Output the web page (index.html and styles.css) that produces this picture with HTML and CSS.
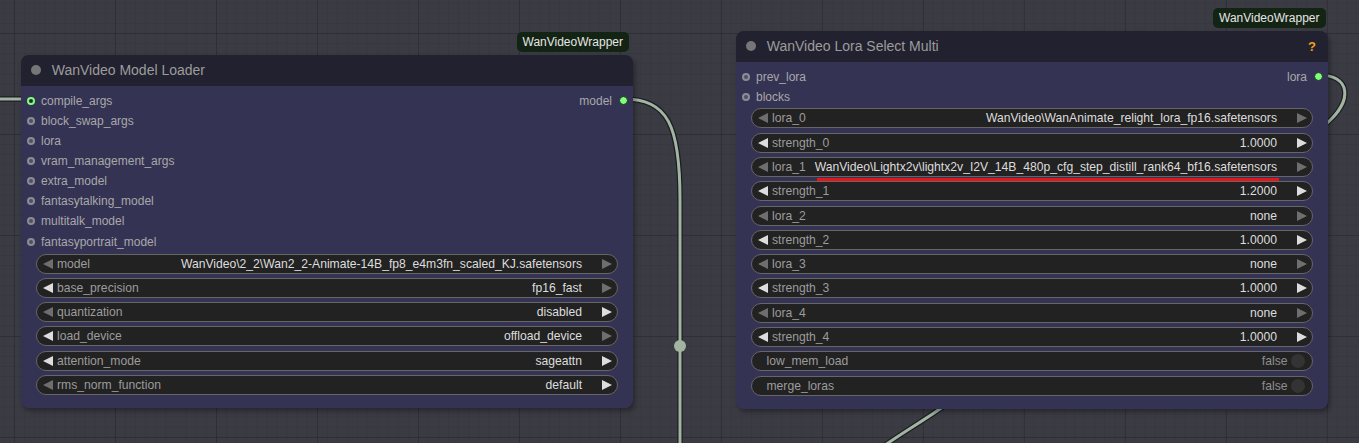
FILE: index.html
```html
<!DOCTYPE html>
<html>
<head>
<meta charset="utf-8">
<link rel="stylesheet" href="styles.css">
</head>
<body>
<div class="canvas">
  <svg class="links" width="1359" height="443" viewBox="0 0 1359 443">
    <g fill="none" stroke-linecap="round">
      <path class="link-edge" d="M0 99 L31 99"/>
      <path class="link-edge" d="M623 99 C668 99, 680 125, 680 200 L680 450"/>
      <path class="link-edge" d="M1319 75 C1350 75, 1354 100, 1326 124"/>
      <path class="link-edge" d="M958 396 C932 416, 906 430, 878 450"/>
      <path class="link" d="M0 99 L31 99"/>
      <path class="link" d="M623 99 C668 99, 680 125, 680 200 L680 450"/>
      <path class="link" d="M1319 75 C1350 75, 1354 100, 1326 124"/>
      <path class="link" d="M958 396 C932 416, 906 430, 878 450"/>
    </g>
    <circle cx="680" cy="346" r="6" class="link-dot"/>
  </svg>

  <div class="node loader">
    <div class="badge badge-loader">WanVideoWrapper</div>
    <div class="header">
      <span class="hdot"></span>
      <span class="title">WanVideo Model Loader</span>
    </div>
    <div class="slots">
      <div class="slot"><span class="in-dot on"></span><span>compile_args</span><span class="out"><span>model</span><span class="out-dot"></span></span></div>
      <div class="slot"><span class="in-dot"></span><span>block_swap_args</span></div>
      <div class="slot"><span class="in-dot"></span><span>lora</span></div>
      <div class="slot"><span class="in-dot"></span><span>vram_management_args</span></div>
      <div class="slot"><span class="in-dot"></span><span>extra_model</span></div>
      <div class="slot"><span class="in-dot"></span><span>fantasytalking_model</span></div>
      <div class="slot"><span class="in-dot"></span><span>multitalk_model</span></div>
      <div class="slot"><span class="in-dot"></span><span>fantasyportrait_model</span></div>
    </div>
    <div class="widgets w-loader">
      <div class="w"><svg class="arr off" viewBox="0 0 10 10"><polygon points="10,0 0,5 10,10"/></svg><span class="lbl">model</span><span class="val">WanVideo\2_2\Wan2_2-Animate-14B_fp8_e4m3fn_scaled_KJ.safetensors</span><svg class="arr off" viewBox="0 0 10 10"><polygon points="0,0 10,5 0,10"/></svg></div>
      <div class="w"><svg class="arr" viewBox="0 0 10 10"><polygon points="10,0 0,5 10,10"/></svg><span class="lbl">base_precision</span><span class="val">fp16_fast</span><svg class="arr off" viewBox="0 0 10 10"><polygon points="0,0 10,5 0,10"/></svg></div>
      <div class="w"><svg class="arr off" viewBox="0 0 10 10"><polygon points="10,0 0,5 10,10"/></svg><span class="lbl">quantization</span><span class="val">disabled</span><svg class="arr" viewBox="0 0 10 10"><polygon points="0,0 10,5 0,10"/></svg></div>
      <div class="w"><svg class="arr" viewBox="0 0 10 10"><polygon points="10,0 0,5 10,10"/></svg><span class="lbl">load_device</span><span class="val">offload_device</span><svg class="arr off" viewBox="0 0 10 10"><polygon points="0,0 10,5 0,10"/></svg></div>
      <div class="w"><svg class="arr" viewBox="0 0 10 10"><polygon points="10,0 0,5 10,10"/></svg><span class="lbl">attention_mode</span><span class="val">sageattn</span><svg class="arr" viewBox="0 0 10 10"><polygon points="0,0 10,5 0,10"/></svg></div>
      <div class="w"><svg class="arr off" viewBox="0 0 10 10"><polygon points="10,0 0,5 10,10"/></svg><span class="lbl">rms_norm_function</span><span class="val">default</span><svg class="arr" viewBox="0 0 10 10"><polygon points="0,0 10,5 0,10"/></svg></div>
    </div>
  </div>

  <div class="node multi">
    <div class="badge badge-multi">WanVideoWrapper</div>
    <div class="header">
      <span class="hdot"></span>
      <span class="title">WanVideo Lora Select Multi</span>
      <span class="help">?</span>
    </div>
    <div class="slots">
      <div class="slot"><span class="in-dot"></span><span>prev_lora</span><span class="out"><span>lora</span><span class="out-dot"></span></span></div>
      <div class="slot"><span class="in-dot"></span><span>blocks</span></div>
    </div>
    <div class="widgets w-multi">
      <div class="w"><svg class="arr off" viewBox="0 0 10 10"><polygon points="10,0 0,5 10,10"/></svg><span class="lbl">lora_0</span><span class="val">WanVideo\WanAnimate_relight_lora_fp16.safetensors</span><svg class="arr off" viewBox="0 0 10 10"><polygon points="0,0 10,5 0,10"/></svg></div>
      <div class="w"><svg class="arr" viewBox="0 0 10 10"><polygon points="10,0 0,5 10,10"/></svg><span class="lbl">strength_0</span><span class="val">1.0000</span><svg class="arr" viewBox="0 0 10 10"><polygon points="0,0 10,5 0,10"/></svg></div>
      <div class="w"><svg class="arr off" viewBox="0 0 10 10"><polygon points="10,0 0,5 10,10"/></svg><span class="lbl">lora_1</span><span class="val marked">WanVideo\Lightx2v\lightx2v_I2V_14B_480p_cfg_step_distill_rank64_bf16.safetensors</span><svg class="arr off" viewBox="0 0 10 10"><polygon points="0,0 10,5 0,10"/></svg></div>
      <div class="w"><svg class="arr" viewBox="0 0 10 10"><polygon points="10,0 0,5 10,10"/></svg><span class="lbl">strength_1</span><span class="val">1.2000</span><svg class="arr" viewBox="0 0 10 10"><polygon points="0,0 10,5 0,10"/></svg></div>
      <div class="w"><svg class="arr off" viewBox="0 0 10 10"><polygon points="10,0 0,5 10,10"/></svg><span class="lbl">lora_2</span><span class="val">none</span><svg class="arr off" viewBox="0 0 10 10"><polygon points="0,0 10,5 0,10"/></svg></div>
      <div class="w"><svg class="arr" viewBox="0 0 10 10"><polygon points="10,0 0,5 10,10"/></svg><span class="lbl">strength_2</span><span class="val">1.0000</span><svg class="arr" viewBox="0 0 10 10"><polygon points="0,0 10,5 0,10"/></svg></div>
      <div class="w"><svg class="arr off" viewBox="0 0 10 10"><polygon points="10,0 0,5 10,10"/></svg><span class="lbl">lora_3</span><span class="val">none</span><svg class="arr off" viewBox="0 0 10 10"><polygon points="0,0 10,5 0,10"/></svg></div>
      <div class="w"><svg class="arr" viewBox="0 0 10 10"><polygon points="10,0 0,5 10,10"/></svg><span class="lbl">strength_3</span><span class="val">1.0000</span><svg class="arr" viewBox="0 0 10 10"><polygon points="0,0 10,5 0,10"/></svg></div>
      <div class="w"><svg class="arr off" viewBox="0 0 10 10"><polygon points="10,0 0,5 10,10"/></svg><span class="lbl">lora_4</span><span class="val">none</span><svg class="arr off" viewBox="0 0 10 10"><polygon points="0,0 10,5 0,10"/></svg></div>
      <div class="w"><svg class="arr" viewBox="0 0 10 10"><polygon points="10,0 0,5 10,10"/></svg><span class="lbl">strength_4</span><span class="val">1.0000</span><svg class="arr" viewBox="0 0 10 10"><polygon points="0,0 10,5 0,10"/></svg></div>
      <div class="w toggle"><span class="lbl">low_mem_load</span><span class="val dim">false</span><span class="knob"></span></div>
      <div class="w toggle"><span class="lbl">merge_loras</span><span class="val dim">false</span><span class="knob"></span></div>
    </div>
  </div>
</div>
</body>
</html>
```
FILE: styles.css
```css
html, body {
  margin: 0;
  padding: 0;
}
body {
  width: 1359px;
  height: 443px;
  overflow: hidden;
  background-color: #3b3b44;
  background-image:
    linear-gradient(to right, rgba(0,0,0,0.16) 1px, transparent 1px),
    linear-gradient(to bottom, rgba(0,0,0,0.16) 1px, transparent 1px),
    linear-gradient(to right, rgba(0,0,0,0.05) 1px, transparent 1px),
    linear-gradient(to bottom, rgba(0,0,0,0.05) 1px, transparent 1px);
  background-size: 101px 101px, 101px 101px, 10.1px 10.1px, 10.1px 10.1px;
  background-position: 115px 33px, 115px 33px, 115px 33px, 115px 33px;
  font-family: "Liberation Sans", Arial, sans-serif;
}
.canvas {
  position: relative;
  width: 1359px;
  height: 443px;
}
.links {
  position: absolute;
  left: 0;
  top: 0;
  z-index: 0;
}
.link-edge {
  stroke: rgba(20, 20, 24, 0.75);
  stroke-width: 5.5;
}
.link {
  stroke: #a2b5a2;
  stroke-width: 3;
}
.link-dot {
  fill: #a2b5a2;
}

.node {
  position: absolute;
  z-index: 1;
  background: #353354;
  border-radius: 8px;
  box-shadow: 2px 3px 5px rgba(0, 0, 0, 0.35);
  padding-bottom: 13px;
}
.loader {
  left: 21px;
  top: 55px;
  width: 612px;
}
.multi {
  left: 736px;
  top: 31px;
  width: 592px;
}
.badge {
  position: absolute;
  top: -23px;
  height: 19.5px;
  padding: 0 6px;
  display: flex;
  align-items: center;
  background: #142414;
  color: #e6e6e6;
  font-size: 12px;
  border-radius: 5px;
  white-space: nowrap;
}
.badge-loader { right: 4px; }
.badge-multi { right: 2.5px; }

.header {
  height: 30.5px;
  background: #22212f;
  border-radius: 8px 8px 0 0;
  display: flex;
  align-items: center;
  padding-left: 10px;
}
.hdot {
  width: 10px;
  height: 10px;
  border-radius: 50%;
  background: #767676;
  margin-right: 10.7px;
}
.title {
  font-size: 14px;
  color: #9c9c9c;
  white-space: nowrap;
}
.help {
  margin-left: auto;
  margin-right: 12px;
  color: #eea21a;
  font-weight: bold;
  font-size: 13px;
}

.slots {
  padding-top: 5px;
}
.slot {
  height: 20.15px;
  display: flex;
  align-items: center;
  font-size: 12px;
  color: #a8a8a8;
  white-space: nowrap;
}
.in-dot {
  width: 8px;
  height: 8px;
  box-sizing: border-box;
  border-radius: 50%;
  border: 2px solid #8c8c96;
  background: #505060;
  margin-left: 6px;
  margin-right: 6px;
  flex: none;
}
.in-dot.on {
  border-color: #7dff7d;
  background: #2a2a34;
}
.out {
  margin-left: auto;
  display: flex;
  align-items: center;
}
.out-dot {
  width: 9px;
  height: 9px;
  box-sizing: border-box;
  border-radius: 50%;
  background: #7dff7d;
  border: 1px solid #1d2a1d;
  margin-left: 6.5px;
  margin-right: 5.5px;
}

.widgets {
  display: flex;
  flex-direction: column;
  gap: 4.25px;
  margin: 0 15px;
}
.w-loader { margin-top: 2px; }
.w-multi { margin-top: 1.5px; gap: 4.32px; }
.w {
  height: 20px;
  box-sizing: border-box;
  border: 1px solid #666;
  border-radius: 10px;
  background: #222;
  display: flex;
  align-items: center;
  padding: 0 5px 0 6px;
  font-size: 12.15px;
  line-height: 14px;
  white-space: nowrap;
}
.arr {
  width: 10px;
  height: 10px;
  flex: none;
  fill: #dddddd;
}
.arr.off {
  fill: #6e6e6e;
}
.lbl {
  color: #9c9c9c;
  margin-left: 4px;
}
.val {
  margin-left: auto;
  margin-right: 20px;
  color: #dddddd;
}
.val.marked {
  position: relative;
}
.val.marked::after {
  content: "";
  position: absolute;
  left: 2px;
  right: -2px;
  top: calc(100% + 4.5px);
  height: 3px;
  background: #e8141b;
}
.w.toggle {
  padding: 0 7px 0 14.5px;
}
.w.toggle .lbl {
  margin-left: 0;
}
.val.dim {
  color: #8e8e8e;
  margin-right: 3.5px;
}
.knob {
  width: 14px;
  height: 14px;
  border-radius: 50%;
  background: #333;
  flex: none;
}
```
